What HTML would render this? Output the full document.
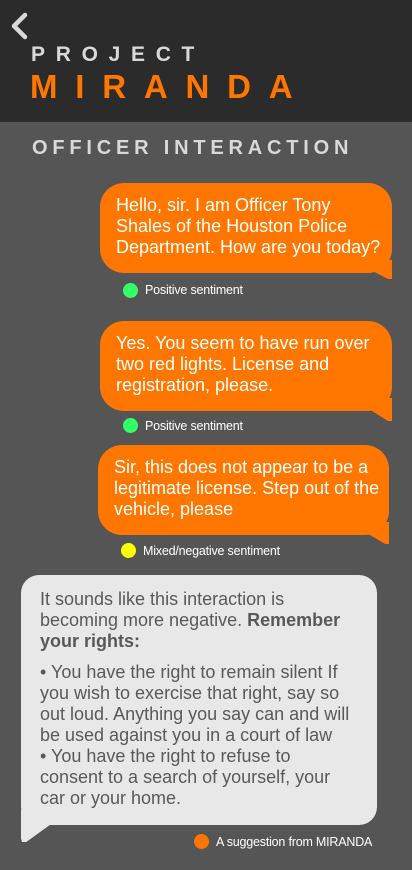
<!DOCTYPE html>
<html><head><style>
*{margin:0;padding:0;box-sizing:border-box}
body{width:412px;height:870px;background:#555555;font-family:"Liberation Sans",Arial,sans-serif;position:relative;overflow:hidden}
.hdr{position:absolute;left:0;top:0;width:412px;height:122px;background:#2b2b2b}
.abs{position:absolute}
.proj{left:31px;top:43px;color:#d9d9d9;font-weight:bold;font-size:21px;letter-spacing:10.7px}
.mir{left:30px;top:68px;color:#ff7700;font-weight:bold;font-size:33px;letter-spacing:17.8px}
.oi{left:32px;top:137px;color:#d9d9d9;font-weight:bold;font-size:20px;letter-spacing:4.8px}
.b{position:absolute;background:#ff7700;color:#fff;font-size:18px;line-height:21px;border-radius:24px;padding:12px 0 0 16px;white-space:nowrap}
.tail{position:absolute;background:#ff7700;clip-path:polygon(0 0,100% 0,100% 100%,85% 100%,0 40%)}
.s{position:absolute;color:#fff;font-size:12.5px;letter-spacing:-0.2px}
.dot{position:absolute;width:15px;height:15px;border-radius:50%}
.g{position:absolute;left:21px;top:575px;width:356px;height:250px;background:#e8e8e8;border-radius:18px;color:#595959;font-size:18px;line-height:21px;padding:14px 0 0 19px;white-space:nowrap}
.gt{position:absolute;left:21px;top:810px;width:35px;height:32px;background:#e8e8e8;clip-path:polygon(0 0,100% 0,100% 33%,15% 100%,3% 100%,0 90%)}
</style></head><body>
<div class="hdr"></div>
<svg class="abs" style="left:8px;top:12px" width="22" height="28" viewBox="0 0 22 28"><path d="M17 3 L6 14 L17 25" stroke="#d9d9d9" stroke-width="4.5" fill="none" stroke-linecap="round" stroke-linejoin="round"/></svg>
<div class="abs proj">PROJECT</div>
<div class="abs mir">MIRANDA</div>
<div class="abs oi">OFFICER INTERACTION</div>

<div class="b" style="left:100px;top:183px;width:292px;height:90px">Hello, sir. I am Officer Tony<br>Shales of the Houston Police<br>Department. How are you today?</div>
<div class="tail" style="left:366px;top:260px;width:26px;height:19px"></div>
<div class="dot" style="left:123px;top:283px;background:#33ff66"></div>
<div class="s" style="left:145px;top:283px">Positive sentiment</div>

<div class="b" style="left:100px;top:321px;width:292px;height:90px">Yes. You seem to have run over<br>two red lights. License and<br>registration, please.</div>
<div class="tail" style="left:366px;top:398px;width:26px;height:23px"></div>
<div class="dot" style="left:123px;top:418px;background:#33ff66"></div>
<div class="s" style="left:145px;top:419px">Positive sentiment</div>

<div class="b" style="left:98px;top:445px;width:291px;height:90px;padding-left:16px">Sir, this does not appear to be a<br>legitimate license. Step out of the<br>vehicle, please</div>
<div class="tail" style="left:363px;top:522px;width:26px;height:22px"></div>
<div class="dot" style="left:121px;top:543px;background:#ffff00"></div>
<div class="s" style="left:143px;top:544px">Mixed/negative sentiment</div>

<div class="g">It sounds like this interaction is<br>becoming more negative. <b>Remember<br>your rights:</b><div style="height:10px"></div>• You have the right to remain silent If<br>you wish to exercise that right, say so<br>out loud. Anything you say can and will<br>be used against you in a court of law<br>• You have the right to refuse to<br>consent to a search of yourself, your<br>car or your home.</div>
<div class="gt"></div>
<div class="dot" style="left:194px;top:834px;background:#ff7700"></div>
<div class="s" style="left:216px;top:835px">A suggestion from MIRANDA</div>
</body></html>
